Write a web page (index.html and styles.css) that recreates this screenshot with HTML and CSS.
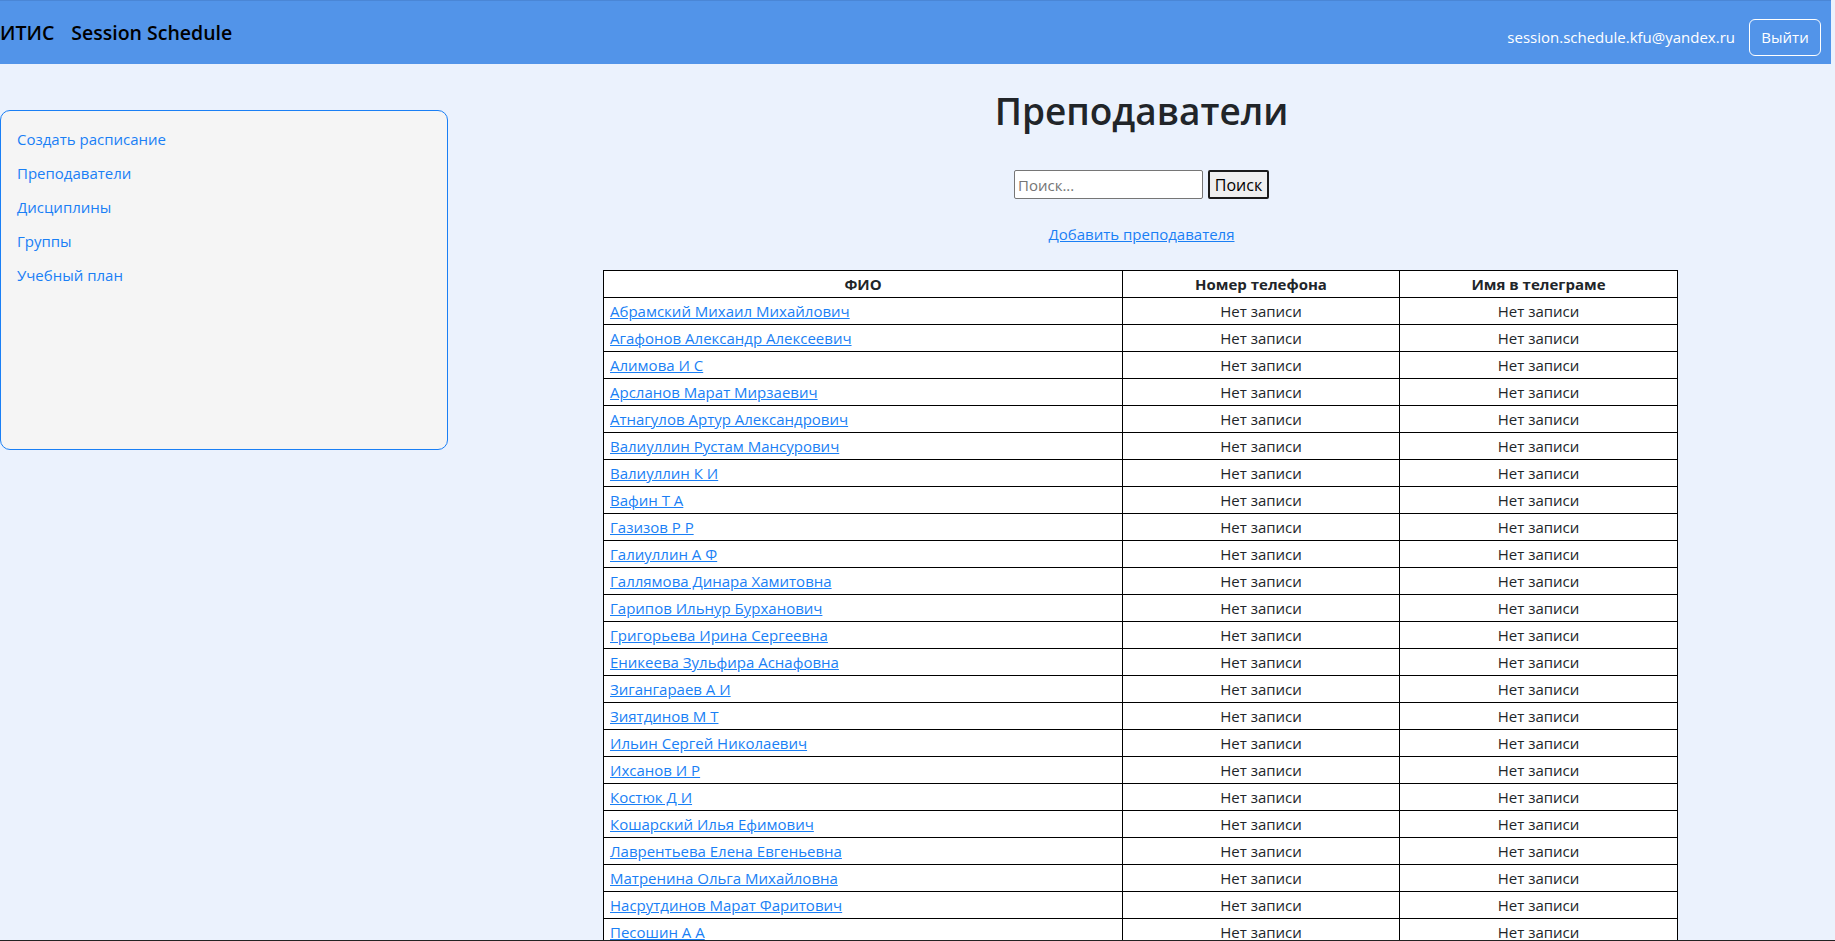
FILE: index.html
```html
<!DOCTYPE html>
<html lang="ru">
<head>
<meta charset="utf-8">
<title>Преподаватели</title>
<link rel="stylesheet" href="styles.css">
</head>
<body>
<header class="topbar">
  <div class="brand"><span class="brand-short">ИТИС</span><span class="brand-name">Session Schedule</span></div>
  <div class="user">
    <span class="email">session.schedule.kfu@yandex.ru</span>
    <button class="logout">Выйти</button>
  </div>
</header>
<div class="layout">
  <aside class="sidebar">
    <a href="#">Создать расписание</a>
    <a href="#">Преподаватели</a>
    <a href="#">Дисциплины</a>
    <a href="#">Группы</a>
    <a href="#">Учебный план</a>
  </aside>
  <main class="content">
    <h1 class="title">Преподаватели</h1>
    <form class="search">
      <input class="search-input" type="text" placeholder="Поиск..."><button class="search-btn" type="button">Поиск</button>
    </form>
    <div class="add"><a href="#">Добавить преподавателя</a></div>
    <table class="teachers">
      <colgroup><col class="c1"><col class="c2"><col class="c3"></colgroup>
      <thead>
        <tr><th>ФИО</th><th>Номер телефона</th><th>Имя в телеграме</th></tr>
      </thead>
      <tbody>
        <tr><td><a href="#">Абрамский Михаил Михайлович</a></td><td>Нет записи</td><td>Нет записи</td></tr>
        <tr><td><a href="#">Агафонов Александр Алексеевич</a></td><td>Нет записи</td><td>Нет записи</td></tr>
        <tr><td><a href="#">Алимова И С</a></td><td>Нет записи</td><td>Нет записи</td></tr>
        <tr><td><a href="#">Арсланов Марат Мирзаевич</a></td><td>Нет записи</td><td>Нет записи</td></tr>
        <tr><td><a href="#">Атнагулов Артур Александрович</a></td><td>Нет записи</td><td>Нет записи</td></tr>
        <tr><td><a href="#">Валиуллин Рустам Мансурович</a></td><td>Нет записи</td><td>Нет записи</td></tr>
        <tr><td><a href="#">Валиуллин К И</a></td><td>Нет записи</td><td>Нет записи</td></tr>
        <tr><td><a href="#">Вафин Т А</a></td><td>Нет записи</td><td>Нет записи</td></tr>
        <tr><td><a href="#">Газизов Р Р</a></td><td>Нет записи</td><td>Нет записи</td></tr>
        <tr><td><a href="#">Галиуллин А Ф</a></td><td>Нет записи</td><td>Нет записи</td></tr>
        <tr><td><a href="#">Галлямова Динара Хамитовна</a></td><td>Нет записи</td><td>Нет записи</td></tr>
        <tr><td><a href="#">Гарипов Ильнур Бурханович</a></td><td>Нет записи</td><td>Нет записи</td></tr>
        <tr><td><a href="#">Григорьева Ирина Сергеевна</a></td><td>Нет записи</td><td>Нет записи</td></tr>
        <tr><td><a href="#">Еникеева Зульфира Аснафовна</a></td><td>Нет записи</td><td>Нет записи</td></tr>
        <tr><td><a href="#">Зигангараев А И</a></td><td>Нет записи</td><td>Нет записи</td></tr>
        <tr><td><a href="#">Зиятдинов М Т</a></td><td>Нет записи</td><td>Нет записи</td></tr>
        <tr><td><a href="#">Ильин Сергей Николаевич</a></td><td>Нет записи</td><td>Нет записи</td></tr>
        <tr><td><a href="#">Ихсанов И Р</a></td><td>Нет записи</td><td>Нет записи</td></tr>
        <tr><td><a href="#">Костюк Д И</a></td><td>Нет записи</td><td>Нет записи</td></tr>
        <tr><td><a href="#">Кошарский Илья Ефимович</a></td><td>Нет записи</td><td>Нет записи</td></tr>
        <tr><td><a href="#">Лаврентьева Елена Евгеньевна</a></td><td>Нет записи</td><td>Нет записи</td></tr>
        <tr><td><a href="#">Матренина Ольга Михайловна</a></td><td>Нет записи</td><td>Нет записи</td></tr>
        <tr><td><a href="#">Насрутдинов Марат Фаритович</a></td><td>Нет записи</td><td>Нет записи</td></tr>
        <tr><td><a href="#">Песошин А А</a></td><td>Нет записи</td><td>Нет записи</td></tr>
      </tbody>
    </table>
  </main>
</div>
</body>
</html>
```
FILE: styles.css
```css
html, body {
  margin: 0;
  padding: 0;
}
body {
  background: #ebf2fd;
  font-family: "Open Sans", "Noto Sans", "DejaVu Sans", sans-serif;
  font-size: 15px;
  color: #212529;
}
body::after {
  content: "";
  position: fixed;
  left: 0;
  right: 0;
  bottom: 0;
  height: 1px;
  background: #222;
}
.topbar {
  height: 63px;
  margin-right: 4px;
  background: #5294e9;
  border-top: 1px solid #4a86d6;
  display: flex;
  align-items: center;
  justify-content: space-between;
}
.brand {
  font-size: 19.5px;
  font-weight: 600;
  color: #000;
  display: flex;
  gap: 17px;
}
.user {
  display: flex;
  align-items: center;
  gap: 14px;
  margin-right: 10px;
  margin-top: 9px;
}
.email {
  color: #fff;
  font-size: 15px;
}
.logout {
  font-family: inherit;
  font-size: 15px;
  color: #fff;
  background: transparent;
  border: 1px solid #fff;
  border-radius: 6px;
  height: 37px;
  width: 72px;
  padding: 0;
}
.layout {
  display: flex;
  align-items: flex-start;
}
.sidebar {
  box-sizing: border-box;
  width: 448px;
  height: 340px;
  margin-top: 46px;
  background: #f5f5f5;
  border: 1px solid #1a7ff5;
  border-radius: 10px;
  padding: 16px 16px;
  display: flex;
  flex-direction: column;
  gap: 9px;
}
.sidebar a {
  color: #1a7ff5;
  text-decoration: none;
  font-size: 15px;
  line-height: 25px;
}
.content {
  flex: 1;
  text-align: center;
}
.title {
  font-size: 37px;
  font-weight: 600;
  margin: 19px 0 0;
  line-height: 56px;
  color: #212529;
}
.search {
  margin: 31px 0 0;
  display: flex;
  justify-content: center;
  gap: 5px;
}
.search-input {
  box-sizing: border-box;
  width: 189px;
  height: 29px;
  border: 1px solid #767676;
  border-radius: 2px;
  font-family: inherit;
  font-size: 15px;
  padding: 0 3px;
  background: #fff;
}
.search-input::placeholder {
  color: #757575;
}
.search-btn {
  box-sizing: border-box;
  height: 29px;
  width: 61px;
  font-family: inherit;
  font-size: 16px;
  background: #efefef;
  border: 2px solid #1b1b1b;
  border-radius: 2px;
  padding: 0;
  color: #000;
}
.add {
  margin-top: 24px;
  line-height: 22px;
}
.add a {
  color: #1a7ff5;
  font-size: 15px;
}
.teachers {
  margin: 25px auto 0;
  width: 1074px;
  border-collapse: collapse;
  table-layout: fixed;
  background: #fff;
  position: relative;
  left: -1px;
}
.c1 { width: 519px; }
.c2 { width: 277px; }
.c3 { width: 278px; }
.teachers th,
.teachers td {
  border: 1px solid #000;
  height: 25px;
  padding: 1px 6px 0;
  font-size: 15px;
  line-height: 25px;
  text-align: center;
  white-space: nowrap;
}
.teachers th {
  font-weight: 700;
}
.teachers td:first-child {
  text-align: left;
}
.teachers td a {
  color: #1a7ff5;
}
```
